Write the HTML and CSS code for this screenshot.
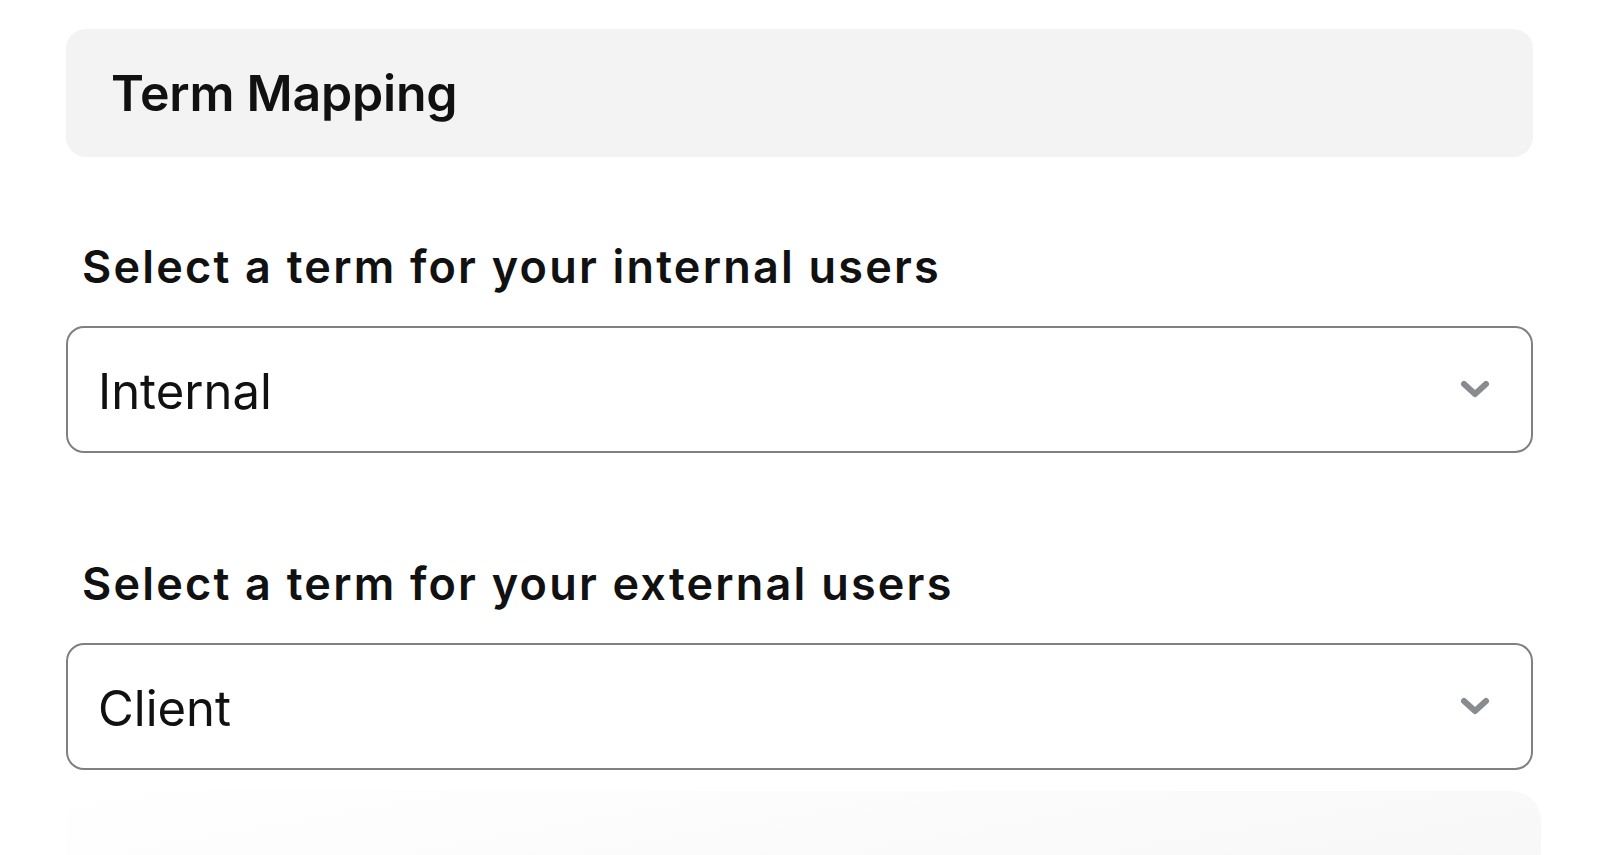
FILE: index.html
```html
<!DOCTYPE html>
<html lang="en">
<head>
<meta charset="utf-8">
<title>Term Mapping</title>
<link rel="stylesheet" href="styles.css">
</head>
<body>
<main class="panel">
  <header class="panel-header">
    <h1 class="panel-title">Term Mapping</h1>
  </header>

  <section class="field field-first">
    <label class="field-label">Select a term for your internal users</label>
    <div class="select">
      <span class="select-value">Internal</span>
      <svg class="chevron" viewBox="0 0 32 20" aria-hidden="true"><path d="M5 5 L16 15 L27 5"/></svg>
    </div>
  </section>

  <section class="field">
    <label class="field-label">Select a term for your external users</label>
    <div class="select">
      <span class="select-value">Client</span>
      <svg class="chevron" viewBox="0 0 32 20" aria-hidden="true"><path d="M5 5 L16 15 L27 5"/></svg>
    </div>
  </section>

  <div class="footer-fade"></div>
</main>
</body>
</html>
```

FILE: styles.css
```css
html, body {
  margin: 0;
  padding: 0;
  background: #ffffff;
}

body {
  font-family: Inter, "Noto Sans", "Liberation Sans", sans-serif;
  color: #111111;
  overflow: hidden;
  height: 855px;
}

.panel {
  width: 1467px;
  margin-left: 66px;
  padding-top: 29px;
}

.panel-header {
  background: #f3f3f3;
  border-radius: 20px;
  padding: 34px 45px;
}

.panel-title {
  margin: 0;
  font-size: 50px;
  line-height: 60px;
  font-weight: 600;
  letter-spacing: -0.2px;
  color: #111111;
}

.field {
  margin-top: 105px;
}

.field-first {
  margin-top: 84px;
}

.field-label {
  display: block;
  margin: 0 0 33px 16px;
  font-size: 45px;
  line-height: 52px;
  font-weight: 600;
  letter-spacing: 2.2px;
  color: #111111;
}

.select {
  box-sizing: border-box;
  height: 127px;
  border: 2px solid #808080;
  border-radius: 18px;
  display: flex;
  align-items: center;
  justify-content: space-between;
  padding: 4px 40px 0 30px;
  background: #ffffff;
}

.select-value {
  font-size: 49px;
  line-height: 60px;
  font-weight: 400;
  color: #111111;
}

.chevron {
  width: 32px;
  height: 20px;
  margin-top: -6px;
}

.chevron path {
  fill: none;
  stroke: #888b90;
  stroke-width: 6;
  stroke-linecap: round;
  stroke-linejoin: round;
}

.footer-fade {
  margin-top: 21px;
  margin-right: -8px;
  height: 80px;
  border-radius: 30px 30px 0 0;
  background: linear-gradient(170deg, #ffffff 0%, #fcfcfc 40%, #f7f7f7 100%);
}
```
